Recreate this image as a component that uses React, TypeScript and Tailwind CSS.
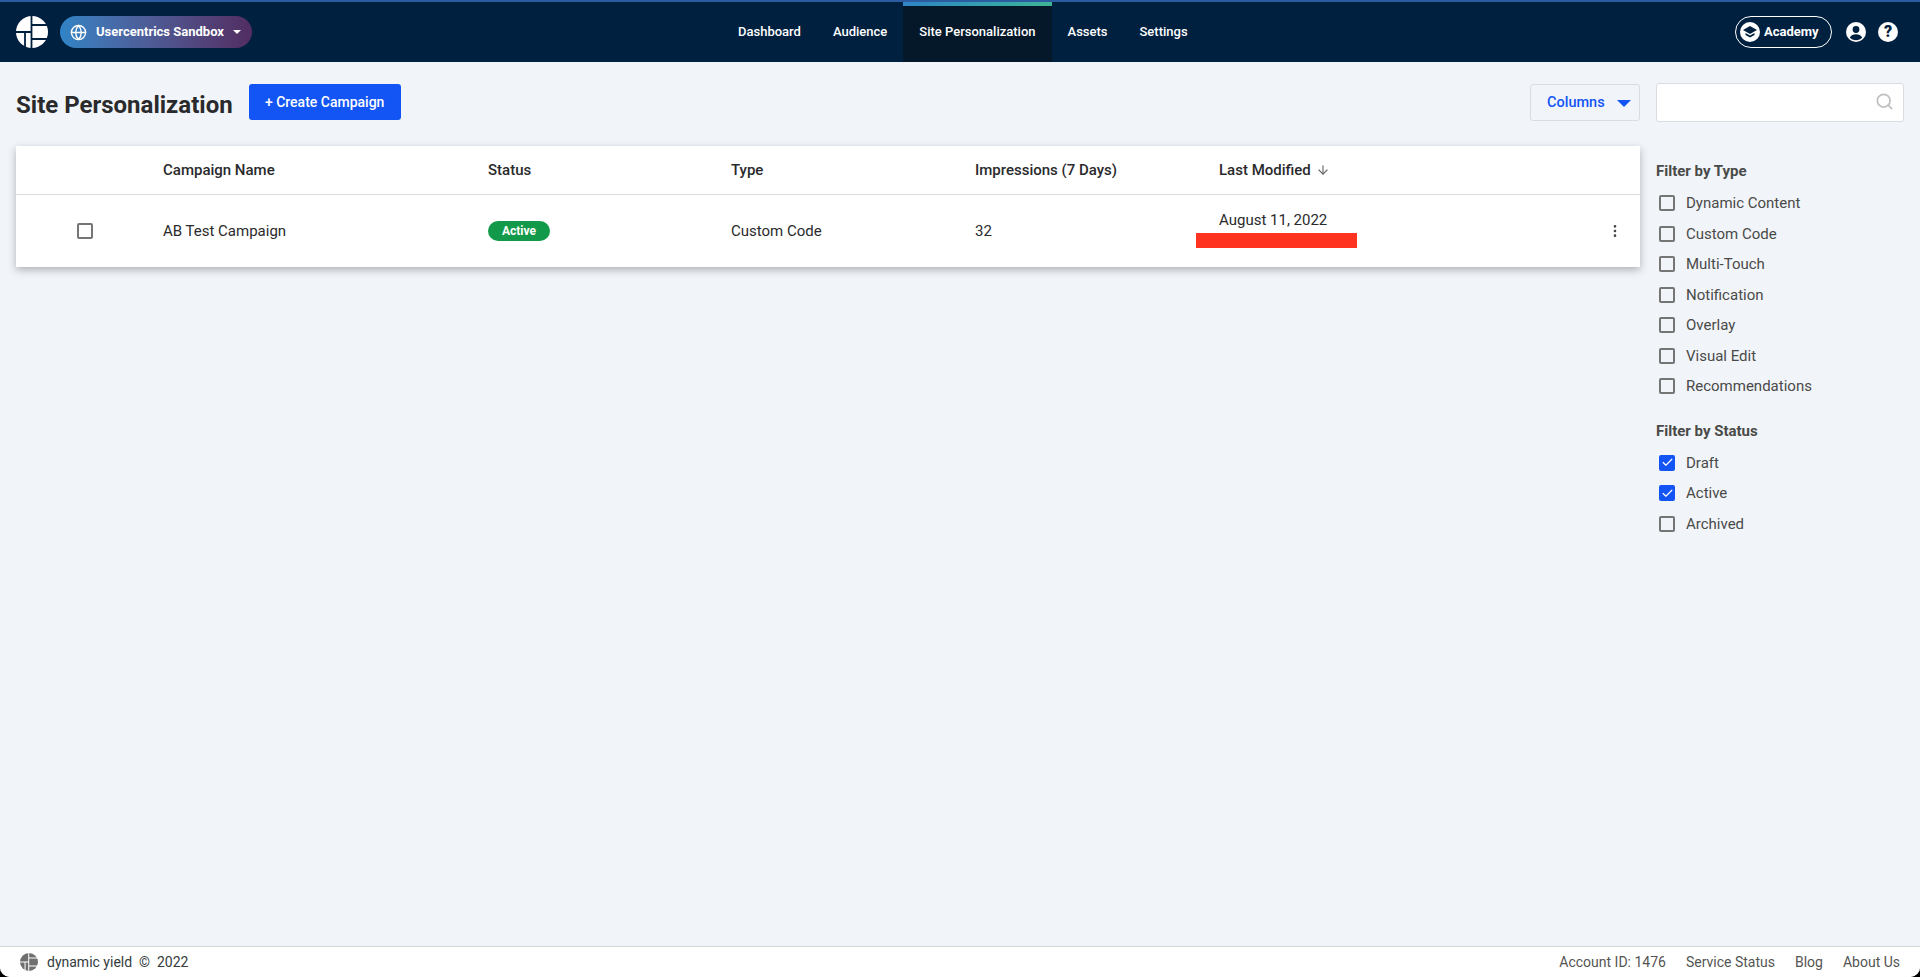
import React from 'react';
import { Search, ArrowDown, Globe, MoreVertical, Check } from 'lucide-react';

const FONT = "font-['Roboto',sans-serif]";

const NAV_ITEMS = ['Dashboard', 'Audience', 'Site Personalization', 'Assets', 'Settings'];
const TYPE_FILTERS = ['Dynamic Content', 'Custom Code', 'Multi-Touch', 'Notification', 'Overlay', 'Visual Edit', 'Recommendations'];
const STATUS_FILTERS = [
  { label: 'Draft', checked: true },
  { label: 'Active', checked: true },
  { label: 'Archived', checked: false },
];

function Logo({ size, color, gap }: { size: number; color: string; gap: string }) {
  return (
    <svg width={size} height={size} viewBox="0 0 32 32" className="shrink-0">
      <circle cx="16" cy="16" r="16" fill={color} />
      <path d="M15.5 0V32M0 16H15.5M9 16V32M15.5 9H32M15.5 23H32" fill="none" stroke={gap} strokeWidth="1.8" />
    </svg>
  );
}

function Box({ checked = false }: { checked?: boolean }) {
  if (checked) {
    return (
      <span className="flex h-4 w-4 shrink-0 items-center justify-center rounded-[2px] bg-[#1354f5]">
        <Check size={13} strokeWidth={2.2} className="text-white" />
      </span>
    );
  }
  return <span className="h-4 w-4 shrink-0 rounded-[2px] border-2 border-[#757575]" />;
}

function FilterRow({ label, checked }: { label: string; checked?: boolean }) {
  return (
    <label className="flex h-[30.5px] items-center gap-[11px] pl-[3px] text-[15px] text-[#4a4a48]">
      <Box checked={checked} />
      {label}
    </label>
  );
}

export default function App() {
  return (
    <div className="h-[977px] w-[1920px] bg-black">
      <div className={`flex h-full w-full flex-col overflow-hidden rounded-b-[10px] bg-[#f1f5f9] ${FONT}`}>
        <header className="flex h-[62px] shrink-0 items-center border-t-2 border-[#2a5c9f] bg-[#00203f] text-white">
          <div className="flex w-[722px] shrink-0 items-center gap-3 pl-4">
            <Logo size={32} color="#ffffff" gap="#00203f" />
            <button
              type="button"
              className="flex h-8 w-[192px] items-center rounded-full bg-gradient-to-r from-[#2f84c6] to-[#512d62] pl-[10px] text-[13px] font-bold"
            >
              <Globe size={17} className="mr-[9px]" />
              Usercentrics Sandbox
              <span className="ml-[9px] h-0 w-0 border-x-[4px] border-t-[4px] border-x-transparent border-t-white" />
            </button>
          </div>

          <nav className="flex h-full items-stretch text-[13px] font-medium">
            {NAV_ITEMS.map((item) =>
              item === 'Site Personalization' ? (
                <a key={item} className="flex flex-col bg-[#04182a]">
                  <span className="h-1 bg-gradient-to-r from-[#2f84c6] to-[#3fb396]" />
                  <span className="flex flex-1 items-center px-4 pb-1">{item}</span>
                </a>
              ) : (
                <a key={item} className="flex items-center px-4">
                  {item}
                </a>
              ),
            )}
          </nav>

          <div className="ml-auto flex items-center pr-[22px]">
            <button
              type="button"
              className="flex h-8 w-[97px] items-center rounded-full border border-white pl-1 text-[13px] font-bold"
            >
              <svg width="20" height="20" viewBox="0 0 20 20" className="mr-[4px]">
                <circle cx="10" cy="10" r="10" fill="#ffffff" />
                <path d="M10 4L17 8L10 12L3 8Z" fill="#00203f" />
                <path d="M5.5 11V13L10 15.5L14.5 13V11L10 13.5Z" fill="#00203f" />
              </svg>
              Academy
            </button>
            <svg width="20" height="20" viewBox="0 0 20 20" className="ml-[14px]">
              <circle cx="10" cy="10" r="10" fill="#ffffff" />
              <circle cx="10" cy="7.5" r="3.4" fill="#00203f" />
              <path d="M3.8 15.4C5 13 7.4 12.2 10 12.2S15 13 16.2 15.4C14.7 17.2 12.5 18.2 10 18.2S5.3 17.2 3.8 15.4Z" fill="#00203f" />
            </svg>
            <span className="ml-3 flex h-5 w-5 items-center justify-center rounded-full bg-white text-[16px] font-black leading-none text-[#00203f]">
              ?
            </span>
          </div>
        </header>

        <main className="flex flex-1 gap-4 px-4">
          <div className="w-[1624px] shrink-0">
            <div className="flex h-[84px] items-center pb-1">
              <h1 className="mt-[6px] text-2xl font-bold text-[#2a2a2c]">Site Personalization</h1>
              <button
                type="button"
                className="ml-4 h-9 w-[152px] rounded-[3px] bg-[#1354f5] text-sm font-medium text-white"
              >
                + Create Campaign
              </button>
            </div>

            <section className="bg-white shadow-[0_3px_8px_rgba(0,0,0,0.28)]">
              <div className="flex h-[49px] items-center border-b border-[#dcdcdc] pl-[147px] text-[15px] font-medium text-[#2a2a2c]">
                <span className="w-[325px]">Campaign Name</span>
                <span className="w-[243px]">Status</span>
                <span className="w-[244px]">Type</span>
                <span className="w-[244px]">Impressions (7 Days)</span>
                <span className="flex items-center gap-[5px]">
                  Last Modified
                  <ArrowDown size={14} className="text-[#666666]" />
                </span>
              </div>
              <div className="flex h-[72px] items-center pl-[61px] text-[15px] text-[#2a2a2c]">
                <Box />
                <span className="ml-[70px] w-[325px]">AB Test Campaign</span>
                <span className="w-[243px]">
                  <span className="flex h-5 w-[62px] items-center justify-center rounded-full bg-[#129a4a] text-xs font-bold text-white">
                    Active
                  </span>
                </span>
                <span className="w-[244px]">Custom Code</span>
                <span className="w-[244px]">32</span>
                <div className="flex flex-col">
                  <span className="mb-[3px] mt-[-4px] leading-5">August 11, 2022</span>
                  <span className="ml-[-23px] h-[15px] w-[161px] bg-[#ff331f]" />
                </div>
                <MoreVertical size={16} className="ml-auto mr-[17px] text-[#444444]" />
              </div>
            </section>
          </div>

          <aside className="w-[248px] shrink-0">
            <div className="flex h-[84px] items-center pb-1">
              <button
                type="button"
                className="ml-[-126px] flex h-[37px] w-[110px] shrink-0 items-center gap-3 rounded-[3px] border border-[#d9dde2] pl-4 pt-[2px] text-[14.5px] font-medium text-[#1354f5]"
              >
                Columns
                <span className="h-0 w-0 border-x-[7px] border-t-[7px] border-x-transparent border-t-[#1354f5]" />
              </button>
              <div className="ml-4 flex h-[39px] w-[248px] shrink-0 items-center justify-end rounded-[3px] border border-[#d9dde2] bg-white pb-[2px] pr-[9px]">
                <Search size={19} strokeWidth={2.2} className="text-[#c0c0c0]" />
              </div>
            </div>

            <h2 className="mt-[15px] text-[15px] font-bold leading-5 text-[#4a4a48]">Filter by Type</h2>
            <div className="mt-[7px]">
              {TYPE_FILTERS.map((label) => (
                <FilterRow key={label} label={label} />
              ))}
            </div>
            <h2 className="mt-[19px] text-[15px] font-bold leading-5 text-[#4a4a48]">Filter by Status</h2>
            <div className="mt-[7px]">
              {STATUS_FILTERS.map((item) => (
                <FilterRow key={item.label} label={item.label} checked={item.checked} />
              ))}
            </div>
          </aside>
        </main>

        <footer className="flex h-[31px] shrink-0 items-center border-t border-[#d6d8d4] bg-white pl-5 pr-5 text-sm text-[#555553]">
          <Logo size={18} color="#6f6f6f" gap="#ffffff" />
          <span className="ml-[9px] text-[#333b40]">dynamic yield&nbsp; ©&nbsp; 2022</span>
          <div className="ml-auto flex gap-5">
            <span>Account ID: 1476</span>
            <span>Service Status</span>
            <span>Blog</span>
            <span>About Us</span>
          </div>
        </footer>
      </div>
    </div>
  );
}
